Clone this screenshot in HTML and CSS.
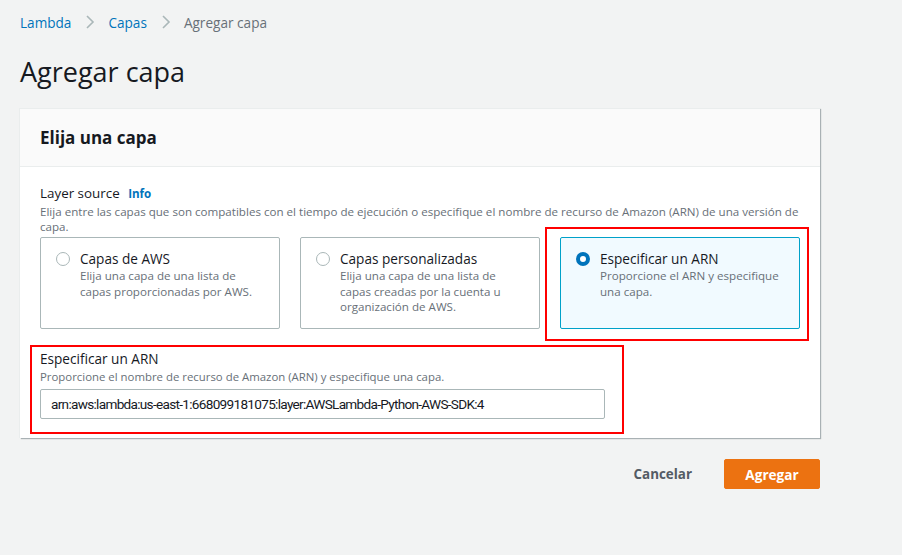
FILE: index.html
```html
<!DOCTYPE html>
<html lang="es">
<head>
<meta charset="utf-8">
<title>Agregar capa</title>
<link rel="stylesheet" href="styles.css">
</head>
<body>
<div class="page">
  <nav class="crumbs">
    <a class="crumb-link">Lambda</a>
    <svg class="chev" viewBox="0 0 10 16" width="10" height="16"><path d="M2 2l6 6-6 6" fill="none" stroke="#aab7b8" stroke-width="1.6"/></svg>
    <a class="crumb-link">Capas</a>
    <svg class="chev" viewBox="0 0 10 16" width="10" height="16"><path d="M2 2l6 6-6 6" fill="none" stroke="#aab7b8" stroke-width="1.6"/></svg>
    <span class="crumb-current">Agregar capa</span>
  </nav>

  <h1 class="title">Agregar capa</h1>

  <section class="card">
    <header class="card-head">
      <h2>Elija una capa</h2>
    </header>
    <div class="card-body">
      <div class="field-label">Layer source <span class="info">Info</span></div>
      <p class="field-desc">Elija entre las capas que son compatibles con el tiempo de ejecución o especifique el nombre de recurso de Amazon (ARN) de una versión de capa.</p>

      <div class="tiles">
        <div class="tile">
          <span class="radio"></span>
          <div class="tile-text">
            <div class="tile-title">Capas de AWS</div>
            <div class="tile-desc">Elija una capa de una lista de capas proporcionadas por AWS.</div>
          </div>
        </div>
        <div class="tile">
          <span class="radio"></span>
          <div class="tile-text">
            <div class="tile-title">Capas personalizadas</div>
            <div class="tile-desc">Elija una capa de una lista de capas creadas por la cuenta u organización de AWS.</div>
          </div>
        </div>
        <div class="tile tile-selected highlight-a">
          <span class="radio radio-on"></span>
          <div class="tile-text">
            <div class="tile-title">Especificar un ARN</div>
            <div class="tile-desc">Proporcione el ARN y especifique una capa.</div>
          </div>
        </div>
      </div>

      <div class="arn highlight-b">
        <div class="arn-label">Especificar un ARN</div>
        <div class="arn-desc">Proporcione el nombre de recurso de Amazon (ARN) y especifique una capa.</div>
        <div class="arn-input">arn:aws:lambda:us-east-1:668099181075:layer:AWSLambda-Python-AWS-SDK:4</div>
      </div>
    </div>
  </section>

  <div class="actions">
    <button class="btn-link">Cancelar</button>
    <button class="btn-primary">Agregar</button>
  </div>
</div>
</body>
</html>
```

FILE: styles.css
```css
html, body {
  margin: 0;
  padding: 0;
  background: #f2f3f3;
  font-family: "Open Sans", "Noto Sans", sans-serif;
  color: #16191f;
}

.page {
  width: 800px;
  padding: 12px 0 0 20px;
}

.crumbs {
  display: flex;
  align-items: center;
  height: 20px;
  font-size: 13.6px;
}

.crumb-link {
  color: #0073bb;
}

.chev {
  margin: 0 13px 0 14px;
}

.crumb-current {
  color: #687078;
}

.title {
  margin: 25px 0 0 0;
  font-size: 27px;
  font-weight: 400;
  line-height: 30px;
  height: 51px;
}

.card {
  background: #fff;
  box-shadow: 1px 1px 1px 0 rgba(0, 28, 36, 0.3), -1px 0 0 0 #eaeded;
  border-top: 1px solid #eaeded;
}

.card-head {
  background: #fafafa;
  border-bottom: 1px solid #eaeded;
  height: 57px;
  display: flex;
  align-items: center;
  padding: 0 20px;
}

.card-head h2 {
  margin: 0;
  font-size: 17px;
  font-weight: 700;
}

.card-body {
  padding: 16px 20px 19px 20px;
}

.field-label {
  font-size: 13.4px;
  line-height: 20px;
}

.info {
  color: #0073bb;
  font-weight: 700;
  font-size: 11.6px;
  margin-left: 5px;
}

.field-desc {
  margin: 0;
  font-size: 11.6px;
  line-height: 15px;
  color: #687078;
}

.tiles {
  display: flex;
  gap: 20px;
  margin-top: 3px;
}

.tile {
  flex: 1;
  height: 92px;
  box-sizing: border-box;
  border: 1px solid #aab7b8;
  border-radius: 2px;
  display: flex;
  padding: 12px 15px;
  gap: 10px;
}

.tile-selected {
  border-color: #00a1c9;
  background: #f1faff;
}

.radio {
  flex: none;
  width: 14px;
  height: 14px;
  box-sizing: border-box;
  border: 1px solid #aab7b8;
  border-radius: 50%;
  margin-top: 2px;
  background: #fff;
}

.radio-on {
  border: 4px solid #0073bb;
}

.tile-title {
  font-size: 13.6px;
  line-height: 18px;
}

.tile-desc {
  font-size: 11.6px;
  line-height: 15.5px;
  color: #687078;
  margin-top: 0;
}

.highlight-a, .highlight-b {
  position: relative;
}

.highlight-a::after {
  content: "";
  position: absolute;
  left: -16px;
  top: -11px;
  right: -10px;
  bottom: -13px;
  border: 2px solid #ff0000;
  pointer-events: none;
}

.arn {
  margin-top: 20px;
}

.highlight-b::after {
  content: "";
  position: absolute;
  left: -10px;
  top: -4px;
  right: 176px;
  bottom: -15px;
  border: 2px solid #ff0000;
  pointer-events: none;
}

.arn-label {
  font-size: 13.6px;
  line-height: 20px;
}

.arn-desc {
  font-size: 11.4px;
  line-height: 16px;
  color: #687078;
}

.arn-input {
  margin-top: 4px;
  width: 565px;
  height: 30px;
  box-sizing: border-box;
  border: 1px solid #aab7b8;
  border-radius: 2px;
  padding: 0 10px;
  display: flex;
  align-items: center;
  font-family: Roboto, "Liberation Sans", sans-serif;
  font-size: 13.6px;
  letter-spacing: -0.7px;
  color: #16191f;
}

.actions {
  display: flex;
  justify-content: flex-end;
  align-items: center;
  gap: 32px;
  margin-top: 21px;
}

.btn-link {
  background: none;
  border: none;
  font-family: inherit;
  font-size: 13.4px;
  font-weight: 700;
  color: #545b64;
  padding: 0;
}

.btn-primary {
  background: #ec7211;
  border: 1px solid #ec7211;
  border-radius: 2px;
  color: #fff;
  font-family: inherit;
  font-size: 13.6px;
  font-weight: 700;
  width: 96px;
  height: 30px;
  padding: 0;
}
```
